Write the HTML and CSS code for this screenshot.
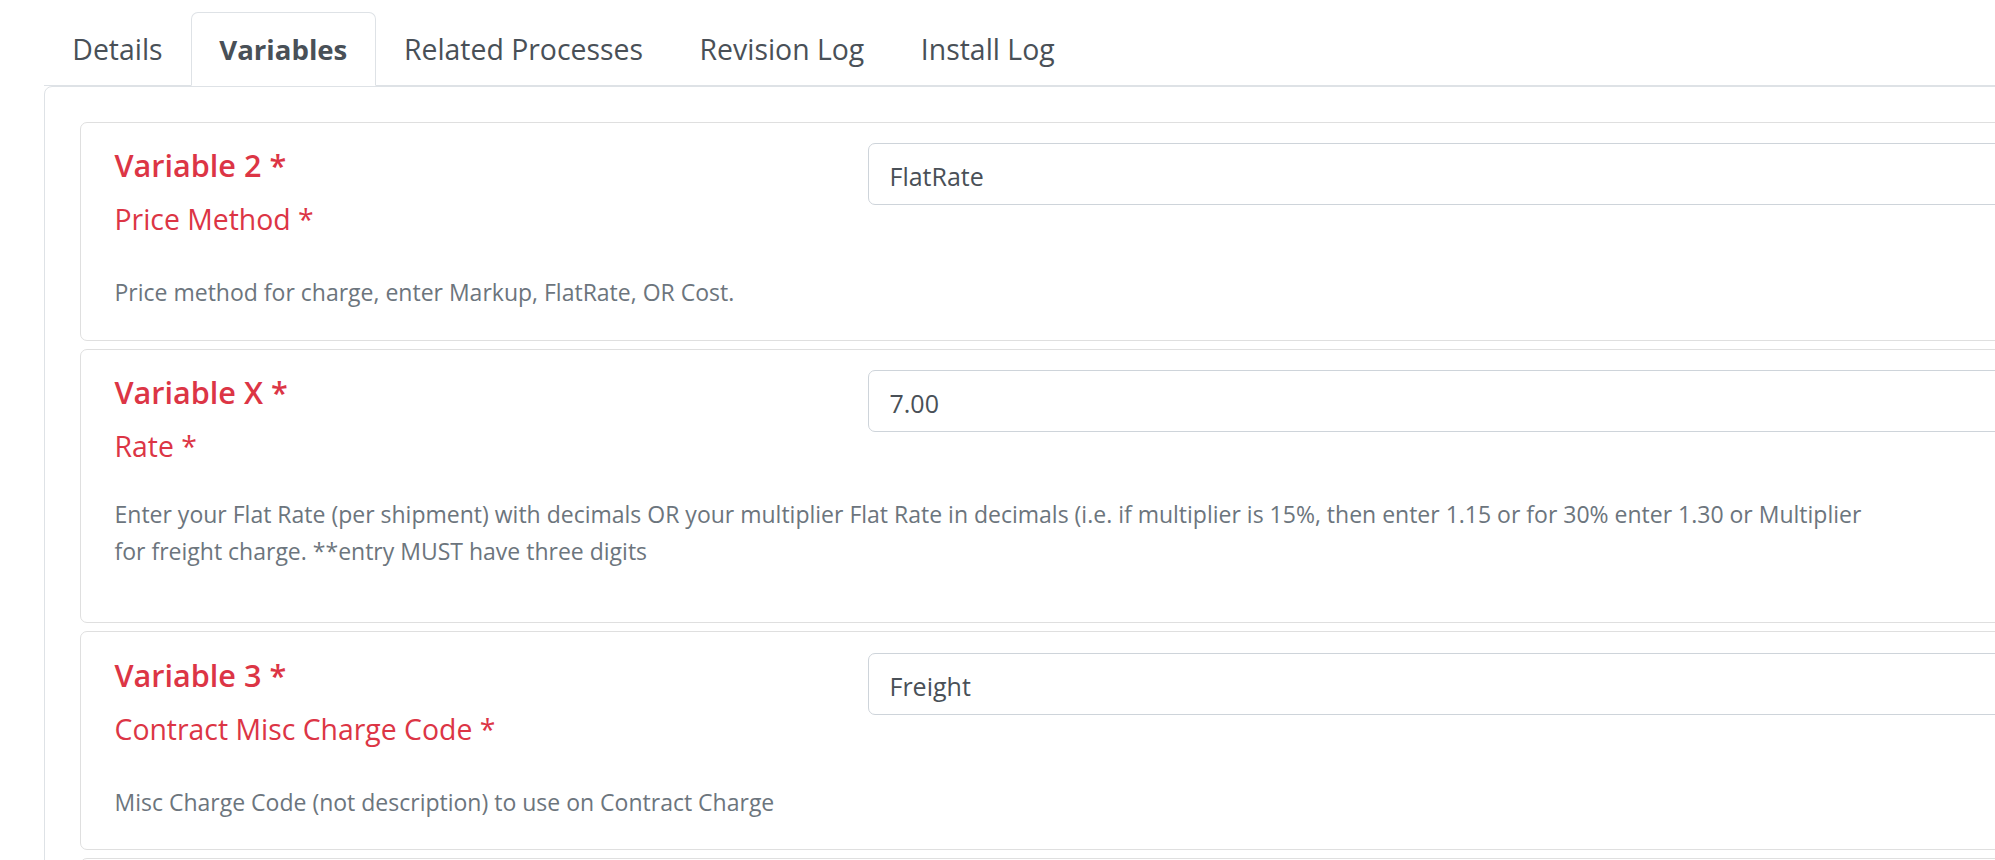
FILE: index.html
```html
<!DOCTYPE html>
<html lang="en">
<head>
<meta charset="utf-8">
<title>Variables</title>
<link rel="stylesheet" href="styles.css">
</head>
<body>
<div class="page">
  <ul class="tabs">
    <li><a class="tab">Details</a></li>
    <li><a class="tab active">Variables</a></li>
    <li><a class="tab">Related Processes</a></li>
    <li><a class="tab">Revision Log</a></li>
    <li><a class="tab">Install Log</a></li>
  </ul>
  <div class="pane">
    <div class="card">
      <div class="var-title">Variable 2 *</div>
      <label class="var-label">Price Method *</label>
      <input class="field" type="text" value="FlatRate">
      <p class="help">Price method for charge, enter Markup, FlatRate, OR Cost.</p>
    </div>
    <div class="card card-long">
      <div class="var-title">Variable X *</div>
      <label class="var-label">Rate *</label>
      <input class="field" type="text" value="7.00">
      <p class="help">Enter your Flat Rate (per shipment) with decimals OR your multiplier Flat Rate in decimals (i.e. if multiplier is 15%, then enter 1.15 or for 30% enter 1.30 or Multiplier<br>for freight charge. **entry MUST have three digits</p>
    </div>
    <div class="card">
      <div class="var-title">Variable 3 *</div>
      <label class="var-label">Contract Misc Charge Code *</label>
      <input class="field" type="text" value="Freight">
      <p class="help">Misc Charge Code (not description) to use on Contract Charge</p>
    </div>
    <div class="card card-empty"></div>
  </div>
</div>
</body>
</html>
```
FILE: styles.css
```css
html, body {
  margin: 0;
  padding: 0;
  background: #ffffff;
  overflow: hidden;
}

body {
  font-family: "Open Sans", "Noto Sans", "Liberation Sans", sans-serif;
  color: #495057;
}

.page {
  width: 2400px;
  padding: 12px 0 0 44px;
  box-sizing: border-box;
}

.tabs {
  display: flex;
  list-style: none;
  margin: 0;
  padding: 0;
  border-bottom: 1px solid #dee2e6;
}

.tab {
  display: block;
  padding: 14.5px 27.3px;
  border: 1px solid transparent;
  border-radius: 7px 7px 0 0;
  margin-bottom: -1px;
  font-size: 28.4px;
  line-height: 43px;
  color: #495057;
}

.tab.active {
  background: #ffffff;
  border-color: #dee2e6 #dee2e6 #ffffff;
  font-size: 27.6px;
  font-weight: 700;
}

.pane {
  border: 1px solid #dee2e6;
  border-top-left-radius: 8px;
  padding: 34.5px;
}

.card {
  display: grid;
  grid-template-columns: 753px 1fr;
  border: 1px solid #dfdfdf;
  border-radius: 7px;
  padding: 20.6px 0 28px 34px;
  margin-bottom: 8px;
}

.var-title {
  grid-column: 1;
  grid-row: 1;
  color: #dc3545;
  font-size: 30.6px;
  font-weight: 600;
  line-height: 44px;
}

.var-label {
  grid-column: 1;
  grid-row: 2;
  margin-top: 11px;
  color: #dc3545;
  font-size: 28.4px;
  line-height: 42px;
}

.field {
  grid-column: 2;
  grid-row: 1 / 3;
  align-self: start;
  box-sizing: border-box;
  width: 100%;
  height: 62px;
  margin: 0;
  padding: 4px 20px 0 21px;
  border: 1px solid #ced4da;
  border-radius: 7px;
  background: #ffffff;
  font-family: "Open Sans", "Noto Sans", "Liberation Sans", sans-serif;
  font-size: 25px;
  color: #495057;
  outline: none;
}

.help {
  grid-column: 1 / -1;
  grid-row: 3;
  margin: 34px 0 0 0;
  color: #6c757d;
  font-size: 23px;
  line-height: 37.4px;
}

.card-long {
  padding-bottom: 51.7px;
}

.card-long .help {
  margin-top: 28.7px;
}

.card-empty {
  min-height: 200px;
}
```
